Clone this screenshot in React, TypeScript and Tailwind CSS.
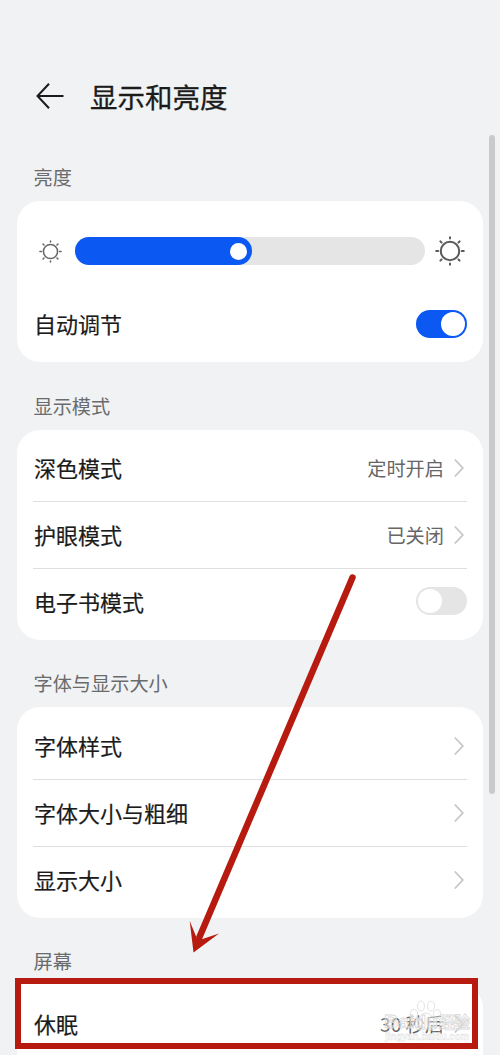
import { JSX, ReactNode } from "react";

function Sun({ size, className }: { size: number; className: string }): JSX.Element {
  return (
    <svg width={size} height={size} viewBox="0 0 30 30" fill="none" stroke="currentColor" strokeWidth="2" strokeLinecap="round" className={className}>
      <circle cx="15" cy="15" r="9.2" />
      <path d="M15 1.2v1.3M15 27.5v1.3M1.2 15h2M26.8 15h2M5.4 5.4l1.1 1.1M23.5 23.5l1.1 1.1M24.6 5.4l-1.1 1.1M6.5 23.5l-1.1 1.1" />
    </svg>
  );
}

function Chevron(): JSX.Element {
  return (
    <svg width="10" height="20" viewBox="0 0 10 20" fill="none" stroke="#c6c6c6" strokeWidth="1.8" className="mr-[3px] ml-[10px]">
      <path d="M.8 1.5L8.8 10L.8 18.5" />
    </svg>
  );
}

function Switch({ on = false }: { on?: boolean }): JSX.Element {
  return (
    <div className={on ? "flex h-7 w-[51px] items-center justify-end rounded-full bg-[#0b58f3] px-[2px]" : "mb-[2px] flex h-7 w-[51px] items-center rounded-full bg-[#e5e5e5] px-[2px]"}>
      <div className="size-6 rounded-full bg-white" />
    </div>
  );
}

function Title({ children }: { children: ReactNode }): JSX.Element {
  return <span className="ml-px pb-[2px] text-[22px] leading-8 [-webkit-text-stroke:0.2px_#1b1b1b]">{children}</span>;
}

function Row({ title, value, children }: { title: string; value?: string; children?: ReactNode }): JSX.Element {
  return (
    <div className="relative z-10 flex h-[66.75px] items-center justify-between border-b border-[#dfdfdf] last:border-b-0">
      <Title>{title}</Title>
      {children ?? (
        <div className="flex items-center">
          <span className="text-[19.2px] leading-7 text-[#666]">{value}</span>
          <Chevron />
        </div>
      )}
    </div>
  );
}

function Section({ label, children }: { label: string; children: ReactNode }): JSX.Element {
  return (
    <section>
      <h2 className="flex h-[67.5px] items-end pb-[10px] pl-[33.5px] text-[19.2px] leading-7 text-[#6a6b6c]">{label}</h2>
      <div className="mx-[17px] rounded-[23px] bg-white px-[16px] pt-[6px] pb-[4px]">{children}</div>
    </section>
  );
}

function Watermark(): JSX.Element {
  return (
    <svg width="95" height="52" viewBox="0 0 95 52" className="absolute top-[997px] left-[382px] z-20" fill="#fff" fillOpacity="0.35" stroke="#dadada" strokeWidth="0.8">
      <ellipse cx="39" cy="9" rx="3.5" ry="5" />
      <ellipse cx="49" cy="9" rx="3.5" ry="5" />
      <ellipse cx="32" cy="17" rx="3.5" ry="4.5" />
      <ellipse cx="55" cy="17" rx="3.5" ry="4.5" />
      <path d="M44 16c5 0 6 5 9 8 4 5 1 9-3 9-3 0-4-1-6-1s-3 1-6 1c-5 0-7-5-3-9 3-3 4-8 9-8z" />
      <g fontFamily="Liberation Sans, Noto Sans CJK SC, sans-serif" fontWeight="700">
        <text x="2" y="31" fontSize="19" textLength="54" lengthAdjust="spacingAndGlyphs">Baidu</text>
        <text x="57" y="31" fontSize="16" textLength="31">经验</text>
        <text x="3" y="43" fontSize="10" textLength="84" lengthAdjust="spacingAndGlyphs" strokeWidth="0.4">jingyan.baidu.com</text>
      </g>
    </svg>
  );
}

export default function App(): JSX.Element {
  return (
    <main className="relative h-[1055px] w-[500px] overflow-hidden bg-[#f0f2f4] font-['Noto_Sans_CJK_SC',sans-serif] text-[#1b1b1b]">
      <header className="flex h-[133.5px] items-center pt-[61px] pl-[36px]">
        <svg width="28" height="26" viewBox="0 0 28 26" fill="none" stroke="currentColor" strokeWidth="2" className="-mt-[3px]">
          <path d="M13 .8L1.5 13L13 25.2M1.5 13H27.5" />
        </svg>
        <h1 className="ml-[26px] pb-[2px] text-[27.5px] leading-10 [-webkit-text-stroke:0.3px_#1b1b1b]">显示和亮度</h1>
      </header>

      <Section label="亮度">
        <div className="flex h-[88px] items-center">
          <Sun size={23} className="ml-[6px] text-[#686868]" />
          <div className="ml-[13px] h-7 w-[350px] rounded-full bg-[#e5e5e5]">
            <div className="flex h-7 w-[177px] items-center justify-end rounded-full bg-[#0b58f3] pr-[5px]">
              <div className="size-[17px] rounded-full bg-white" />
            </div>
          </div>
          <Sun size={30} className="ml-[10px] text-[#5b5b5b]" />
        </div>
        <div className="mb-[6px] flex h-[57px] items-center justify-between">
          <Title>自动调节</Title>
          <Switch on />
        </div>
      </Section>

      <Section label="显示模式">
        <Row title="深色模式" value="定时开启" />
        <Row title="护眼模式" value="已关闭" />
        <Row title="电子书模式">
          <Switch />
        </Row>
      </Section>

      <Section label="字体与显示大小">
        <Row title="字体样式" />
        <Row title="字体大小与粗细" />
        <Row title="显示大小" />
      </Section>

      <Section label="屏幕">
        <Row title="休眠" value="30 秒后" />
        <div className="h-16" />
      </Section>

      <div className="absolute top-[135px] left-[489px] h-[659px] w-[6px] rounded-full bg-[#c8cacc]" />
      <div className="absolute top-[978px] left-[15px] h-[71px] w-[463px] border-[6px] border-[#b71b0f] bg-white" />
      <Watermark />
      <svg width="170" height="385" viewBox="0 0 170 385" className="absolute top-[570px] left-[187px] z-20">
        <path d="M165.5 7.5L12.5 367" stroke="#b71b0f" strokeWidth="6.5" strokeLinecap="round" />
        <path d="M6.5 382.5L2.7 351L9.7 368L15.5 369L32 363.5z" fill="#b71b0f" />
      </svg>
    </main>
  );
}
